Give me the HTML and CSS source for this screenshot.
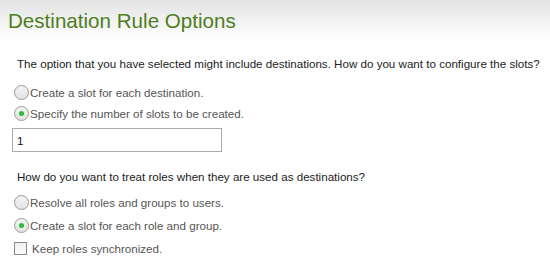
FILE: index.html
```html
<!DOCTYPE html>
<html lang="en">
<head>
  <meta charset="UTF-8">
  <title>Destination Rule Options</title>
  <link rel="stylesheet" href="styles.css">
</head>
<body>
  <div class="cabecera">
    <h1>Destination Rule Options</h1>
  </div>

  <div class="contenido">
    <p class="pregunta">The option that you have selected might include destinations. How do you want to configure the slots?</p>
    <label class="opcion"><input type="radio" name="slots"> Create a slot for each destination.</label>
    <label class="opcion"><input type="radio" name="slots" checked> Specify the number of slots to be created.</label>
    <input class="cantidad" type="text" value="1">

    <p class="pregunta segunda">How do you want to treat roles when they are used as destinations?</p>
    <label class="opcion alta"><input type="radio" name="roles"> Resolve all roles and groups to users.</label>
    <label class="opcion alta"><input type="radio" name="roles" checked> Create a slot for each role and group.</label>
    <label class="opcion alta caja"><input type="checkbox"> Keep roles synchronized.</label>
  </div>
</body>
</html>
```

FILE: styles.css
```css
body {
  margin: 0;
  font-family: "Liberation Sans", Arial, sans-serif;
  background: #fff;
}
.cabecera {
  height: 40px;
  padding-left: 8px;
  background: linear-gradient(#e3e3e4, #fff);
}
.cabecera h1 {
  margin: 0;
  padding-top: 9px;
  font-size: 20.6px;
  font-weight: normal;
  color: #4f7d1d;
}
.contenido {
  padding-left: 14px;
}
.pregunta {
  margin: 17px 0 12px 3px;
  font-size: 11.6px;
  color: #222;
}
.segunda {
  margin-top: 18px;
  margin-bottom: 8px;
}
.opcion {
  display: flex;
  align-items: center;
  height: 21px;
  font-size: 11.6px;
  color: #555;
}
.alta {
  height: 23px;
}
.opcion input {
  appearance: none;
  margin: 0 1px 0 0;
  width: 15px;
  height: 15px;
  border: 1px solid #999;
  border-radius: 50%;
  background: linear-gradient(#f4f4f4, #e2e2e2);
  display: grid;
  place-items: center;
}
.opcion input:checked::after {
  content: "";
  width: 5px;
  height: 5px;
  border-radius: 50%;
  background: #2dbb3a;
}
.caja input {
  border-radius: 0;
  width: 13px;
  height: 13px;
  margin-right: 5px;
  border-color: #8a8a8a;
  background: linear-gradient(#f0f0f0, #fcfcfc);
}
.cantidad {
  display: block;
  box-sizing: border-box;
  width: 210px;
  height: 24px;
  margin: 4px 0 0 -2px;
  padding: 0 4px;
  border: 1px solid #aaa;
  font-family: inherit;
  font-size: 11.6px;
  color: #111;
}
```
